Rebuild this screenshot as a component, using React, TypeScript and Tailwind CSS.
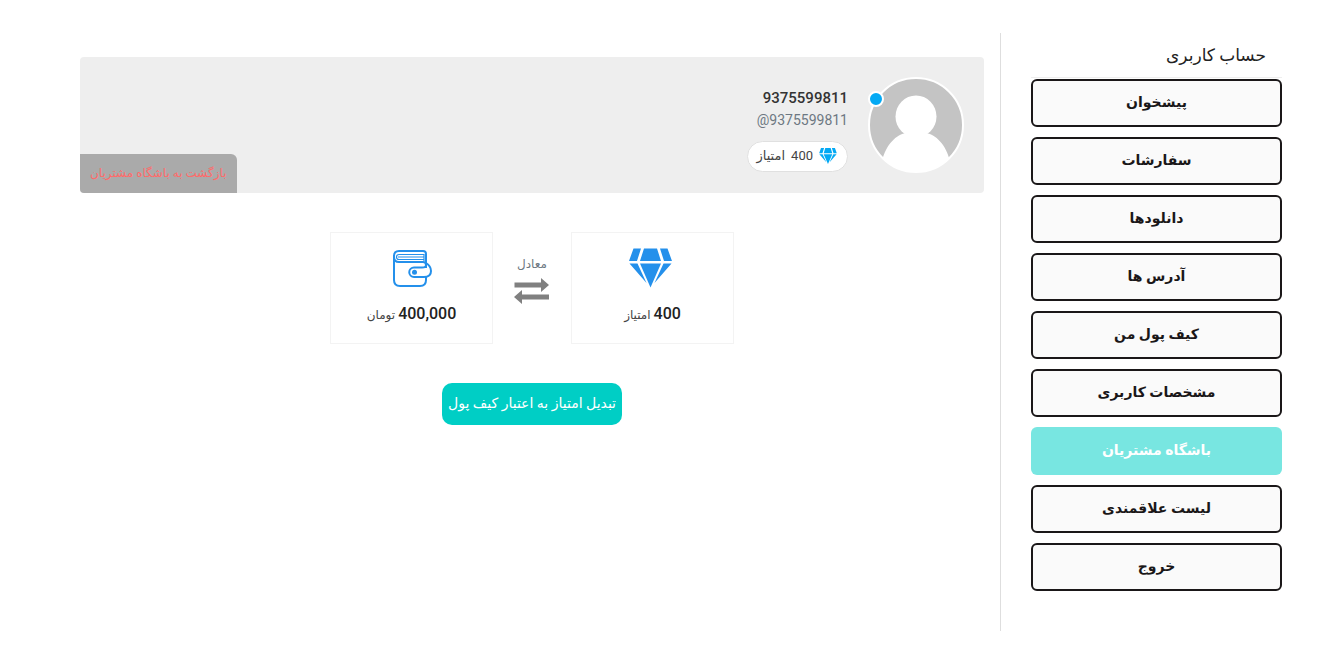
import type React from "react";

const menuItems = [
  { label: "پیشخوان" },
  { label: "سفارشات" },
  { label: "دانلودها" },
  { label: "آدرس ها" },
  { label: "کیف پول من" },
  { label: "مشخصات کاربری" },
  { label: "باشگاه مشتریان", active: true },
  { label: "لیست علاقمندی" },
  { label: "خروج" },
];

const DiamondIcon: React.FC<{ className?: string }> = ({ className }) => (
  <svg viewBox="0 0 48 39" fill="currentColor" className={className} aria-hidden="true">
    <path d="M4.500 0H12L8 12.500H0ZM15 0H28L32 12.500H11ZM31 0H38.500L43 12.500H35ZM0.500 15H8.500L17.500 34.500ZM11 15H32L21.500 39ZM34.500 15H42.500L25.500 34.500Z" />
  </svg>
);

const WalletIcon: React.FC = () => (
  <svg
    viewBox="0 0 40 40"
    fill="none"
    stroke="currentColor"
    strokeWidth="2"
    className="size-10"
    aria-hidden="true"
  >
    <path d="M34 20V6Q34 3 31 3H7Q2 3 2 8V32Q2 38 8 38H28Q34 38 34 32V29" />
    <path d="M2 9Q2 14 7 14H31Q34 14 34 17" />
    <path d="M32 13V6.500H7Q4.500 6.500 4.500 9Q4.500 11.500 7 11.500H32M6 9H32" strokeWidth="1.200" />
    <path d="M34 15V17Q34 19.500 30 19.500H22A4.700 4.700 0 0 0 22 29H32Q39 29 39 23Q39 18 34 15" />
    <circle cx="22.500" cy="24.200" r="2.500" fill="currentColor" stroke="none" />
  </svg>
);

const ExchangeIcon: React.FC = () => (
  <svg viewBox="0 0 36 26" fill="#808080" className="h-[26px] w-9" aria-hidden="true">
    <path d="M0.500 4.500H27V0L35 7L27 14V9.500H0.500ZM35 16.500H8V12L0 19L8 26V21.500H35Z" />
  </svg>
);

const Avatar: React.FC = () => (
  <div className="relative size-24">
    <svg viewBox="0 0 96 96" className="size-24" role="img" aria-label="9375599811">
      <defs>
        <clipPath id="avatar">
          <circle cx="48" cy="48" r="47" />
        </clipPath>
      </defs>
      <g clipPath="url(#avatar)">
        <rect width="96" height="96" fill="#c4c4c4" />
        <ellipse cx="48" cy="39.500" rx="20.500" ry="21" fill="#fff" />
        <path
          d="M14 84C18 68 28 57 39 56Q48 60 57 56C68 57 78 68 82 84V96H14Z"
          fill="#fff"
        />
      </g>
      <circle cx="48" cy="48" r="47" fill="none" stroke="#fff" strokeWidth="2" />
    </svg>
    <span className="absolute top-3.5 left-0 size-4 rounded-full border-2 border-white bg-[#03a9f4]" />
  </div>
);

const Sidebar: React.FC = () => {
  return (
    <aside className="w-[282px] shrink-0 border-l border-[#dedede] pb-10 pl-[30px]">
      <h2 className="border-b border-[#eeeeee] px-4 pt-2 pb-2 text-[17px] leading-7 text-[#222]">
        حساب کاربری
      </h2>
      <nav className="mt-px flex flex-col gap-2.5">
        {menuItems.map((item) => (
          <a
            key={item.label}
            href="#"
            className={
              item.active
                ? "flex h-12 items-center justify-center rounded-md bg-[#78e6e1] pb-0.5 text-sm font-bold text-white"
                : "flex h-12 items-center justify-center rounded-md border-2 border-[#1a1718] bg-[#fafafa] pb-0.5 text-sm font-bold text-[#1a1718]"
            }
          >
            {item.label}
          </a>
        ))}
      </nav>
    </aside>
  );
};

const ProfileHeader: React.FC = () => {
  return (
    <header className="relative flex h-[136px] gap-5 overflow-hidden rounded bg-[#eeeeee] p-5">
      <Avatar />
      <div className="flex flex-col items-start pt-[9px]">
        <h1 className="text-[15px] leading-6 font-medium text-[#333]">9375599811</h1>
        <p dir="ltr" className="text-sm leading-5 text-[#6d7882]">
          @9375599811
        </p>
        <div className="mt-[11px] flex h-[31px] items-center gap-1.5 rounded-full border border-[#e0e0e0] bg-white px-2 pb-0.5 text-[13px] text-[#444]">
          <DiamondIcon className="h-4 w-5 text-[#03a9f4]" />
          <span>400</span>
          <span>امتیاز</span>
        </div>
      </div>
      <a
        href="#"
        className="absolute bottom-0 left-0 flex h-[39px] items-center rounded-tr-md bg-[#aaaaaa] px-2.5 pb-0.5 text-xs text-[#ff6b6b]"
      >
        بازگشت به باشگاه مشتریان
      </a>
    </header>
  );
};

const PointsExchange: React.FC = () => {
  return (
    <section className="mt-[39px] flex flex-col items-center">
      <div className="flex gap-[21px]">
        <div className="flex h-28 w-[163px] flex-col items-center border border-[#f3f3f3] pt-[15px]">
          <DiamondIcon className="h-10 w-12 text-[#2490eb]" />
          <p className="mt-3.5 text-xs leading-6 text-[#444]">
            <strong className="text-base font-medium text-[#222]">400</strong> امتیاز
          </p>
        </div>
        <div className="flex flex-col items-center pt-5">
          <p className="text-xs leading-6 text-[#6d7882]">معادل</p>
          <div className="mt-0.5">
            <ExchangeIcon />
          </div>
        </div>
        <div className="flex h-28 w-[163px] flex-col items-center border border-[#f3f3f3] pt-[15px] text-[#2490eb]">
          <WalletIcon />
          <p className="mt-3.5 text-xs leading-6 text-[#444]">
            <strong className="text-base font-medium text-[#222]">400,000</strong> تومان
          </p>
        </div>
      </div>
      <button
        type="button"
        className="mt-[39px] h-[42px] rounded-[10px] bg-[#00cec5] px-1.5 pb-0.5 text-sm font-medium text-white"
      >
        تبدیل امتیاز به اعتبار کیف پول
      </button>
    </section>
  );
};

const App: React.FC = () => {
  return (
    <div
      dir="rtl"
      className="flex min-h-screen gap-4 bg-white pt-[33px] pr-[41px] pb-7 pl-20 font-[Roboto,'DejaVu_Sans',sans-serif]"
    >
      <Sidebar />
      <main className="min-w-0 flex-1 pt-6">
        <ProfileHeader />
        <PointsExchange />
      </main>
    </div>
  );
};

export default App;
